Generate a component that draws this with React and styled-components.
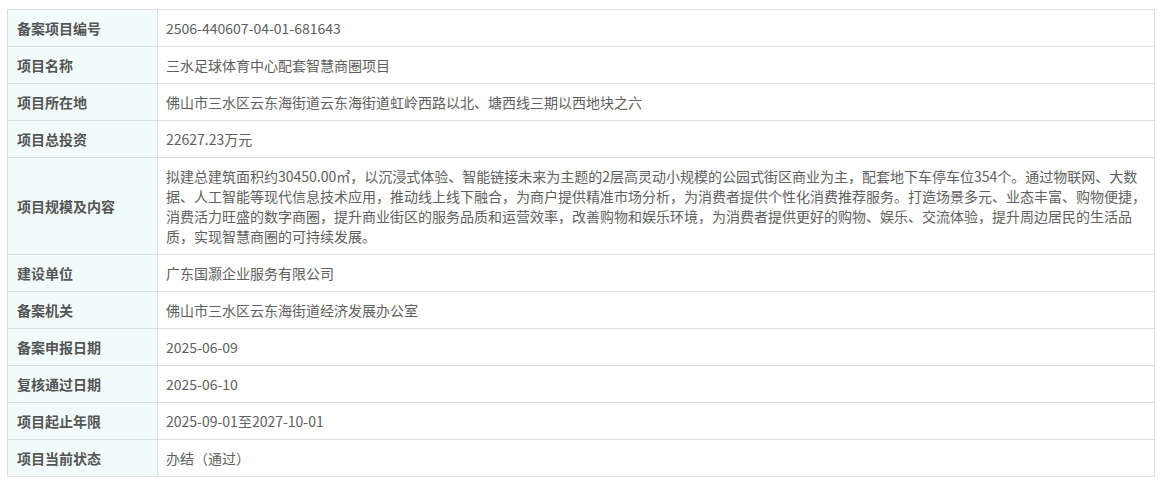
import React from "react";
import styled, { createGlobalStyle } from "styled-components";

const Global = createGlobalStyle`
  html, body { margin: 0; padding: 0; background: #fff; }
  body { font-family: "Noto Sans CJK SC", "Noto Sans", sans-serif; }
`;

const Wrap = styled.div`
  padding: 9px 0 0 7px;
  width: 1148px;
`;

const Table = styled.table`
  width: 1148px;
  border-collapse: collapse;
  table-layout: fixed;
  font-size: 14px;
  line-height: 20px;
`;

const Label = styled.th`
  width: 132px;
  background: #f3fcfc;
  border: 1px solid #dddddd;
  padding: 8px 8px 8px 9px;
  text-align: left;
  font-weight: bold;
  color: #555555;
  vertical-align: middle;
`;

const Value = styled.td`
  border: 1px solid #dddddd;
  padding: 8px 6px 8px 8px;
  color: #606060;
  text-align: left;
  vertical-align: middle;
`;

const rows = [
  ["备案项目编号", "2506-440607-04-01-681643"],
  ["项目名称", "三水足球体育中心配套智慧商圈项目"],
  ["项目所在地", "佛山市三水区云东海街道云东海街道虹岭西路以北、塘西线三期以西地块之六"],
  ["项目总投资", "22627.23万元"],
  [
    "项目规模及内容",
    "拟建总建筑面积约30450.00㎡，以沉浸式体验、智能链接未来为主题的2层高灵动小规模的公园式街区商业为主，配套地下车停车位354个。通过物联网、大数据、人工智能等现代信息技术应用，推动线上线下融合，为商户提供精准市场分析，为消费者提供个性化消费推荐服务。打造场景多元、业态丰富、购物便捷，消费活力旺盛的数字商圈，提升商业街区的服务品质和运营效率，改善购物和娱乐环境，为消费者提供更好的购物、娱乐、交流体验，提升周边居民的生活品质，实现智慧商圈的可持续发展。",
  ],
  ["建设单位", "广东国灏企业服务有限公司"],
  ["备案机关", "佛山市三水区云东海街道经济发展办公室"],
  ["备案申报日期", "2025-06-09"],
  ["复核通过日期", "2025-06-10"],
  ["项目起止年限", "2025-09-01至2027-10-01"],
  ["项目当前状态", "办结（通过）"],
];

export default function App() {
  return (
    <Wrap>
      <Global />
      <Table>
        <tbody>
          {rows.map(([k, v]) => (
            <tr key={k}>
              <Label>{k}</Label>
              <Value>{v}</Value>
            </tr>
          ))}
        </tbody>
      </Table>
    </Wrap>
  );
}
